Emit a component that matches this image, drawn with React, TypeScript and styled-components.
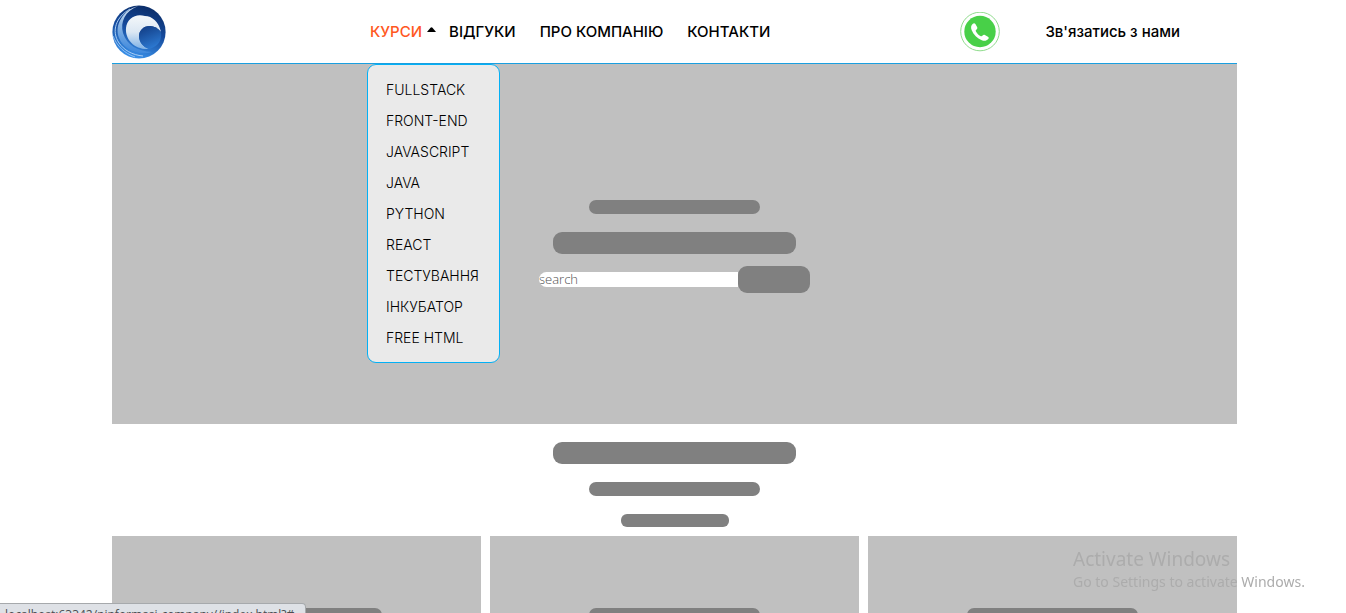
import React from 'react';
import styled, { createGlobalStyle } from 'styled-components';

const GlobalStyle = createGlobalStyle`
  * { box-sizing: border-box; }
  html, body, #root { height: 100%; }
  body {
    margin: 0;
    overflow: hidden;
    background: #fff;
    color: #000;
    font-family: Inter, "Noto Sans", sans-serif;
    font-size: 15px;
  }
`;

const Page = styled.div`
  height: 100%;
  overflow: hidden;
  padding: 0 109px 0 112px;
`;

const Header = styled.header`
  position: relative;
  display: flex;
  align-items: center;
  height: 64px;
  border-bottom: 1px solid #1a9fe0;
`;

const LogoLink = styled.a`
  display: block;
  width: 54px;
  height: 54px;
`;

const Nav = styled.nav`
  margin-left: 204px;
  flex: 1;
`;

const NavList = styled.ul`
  display: flex;
  gap: 24px;
  margin: 0;
  padding: 0;
  list-style: none;
`;

const NavItem = styled.li<{ $wide?: boolean }>`
  position: relative;
  margin-right: ${(p) => (p.$wide ? '-11px' : '0')};
`;

const NavLink = styled.a<{ $active?: boolean }>`
  display: flex;
  align-items: center;
  gap: 5px;
  line-height: 24px;
  font-weight: 500;
  white-space: nowrap;
  text-decoration: none;
  color: ${(p) => (p.$active ? '#ff5722' : '#000')};
`;

const Caret = styled.svg`
  display: block;
  margin-bottom: 4px;
`;

const Dropdown = styled.ul`
  position: absolute;
  z-index: 2;
  top: 44px;
  left: -3px;
  width: 133px;
  margin: 0;
  padding: 9px 18px;
  list-style: none;
  background: #eaeaea;
  border: 1px solid #03b0f5;
  border-radius: 9px;
`;

const DropdownLink = styled.a`
  display: block;
  line-height: 31px;
  font-size: 14px;
  font-weight: 300;
  white-space: nowrap;
  color: #000;
  text-decoration: none;
`;

const Contact = styled.div`
  display: flex;
  align-items: center;
  gap: 45px;
  margin-right: 57px;
`;

const PhoneLink = styled.a`
  display: block;
  height: 40px;
`;

const ContactLink = styled.a`
  font-weight: 500;
  line-height: 24px;
  white-space: nowrap;
  color: #000;
  text-decoration: none;
`;

const Hero = styled.section`
  display: flex;
  flex-direction: column;
  align-items: center;
  gap: 18px;
  height: 360px;
  padding-top: 136px;
  background: #c0c0c0;
`;

const sizes = {
  large: [243, 22, 9],
  medium: [171, 14, 7],
  small: [108, 13, 6],
};

const Bar = styled.div<{ $size: keyof typeof sizes }>`
  width: ${(p) => sizes[p.$size][0]}px;
  height: ${(p) => sizes[p.$size][1]}px;
  border-radius: ${(p) => sizes[p.$size][2]}px;
  background: #808080;
`;

const SearchForm = styled.form`
  display: flex;
  align-items: center;
  margin-top: -6px;
`;

const SearchInput = styled.input`
  width: 199px;
  height: 15px;
  padding: 0;
  border: 0;
  border-radius: 9px 0 0 9px;
  background: #fff;
  font: 300 13px/15px "Open Sans", sans-serif;
  color: #000;
  &::placeholder { color: #505050; opacity: 1; }
`;

const SearchButton = styled.button`
  width: 72px;
  height: 27px;
  padding: 0;
  border: 0;
  border-radius: 9px;
  background: #808080;
`;

const Intro = styled.section`
  display: flex;
  flex-direction: column;
  align-items: center;
  gap: 18px;
  padding: 18px 0 9px;
`;

const Cards = styled.section`
  display: grid;
  grid-template-columns: repeat(3, 1fr);
  gap: 9px;
`;

const Card = styled.article`
  display: flex;
  flex-direction: column;
  align-items: center;
  min-height: 300px;
  padding-top: 72px;
  background: #c0c0c0;
`;

const StatusBar = styled.div`
  position: fixed;
  left: 0;
  bottom: -12px;
  z-index: 3;
  width: 306px;
  height: 22px;
  padding-left: 5px;
  border: 1px solid #a6a9ac;
  border-left: 0;
  border-radius: 0 4px 0 0;
  background: #dee1e6;
  font: 12px/22px "Open Sans", sans-serif;
  color: #4a4d51;
  white-space: nowrap;
  overflow: hidden;
`;

const Watermark = styled.aside`
  position: fixed;
  right: 37px;
  bottom: 21px;
  z-index: 3;
  width: 236px;
  color: #acacac;
  font-family: "Noto Sans", sans-serif;
  white-space: nowrap;
`;

const WatermarkTitle = styled.div`
  font-size: 19px;
  line-height: 25px;
`;

const WatermarkText = styled.div`
  font-size: 14px;
  line-height: 20px;
`;

const courses = ['FULLSTACK', 'FRONT-END', 'JAVASCRIPT', 'JAVA', 'PYTHON', 'REACT', 'ТЕСТУВАННЯ', 'ІНКУБАТОР', 'FREE HTML'];

function Logo() {
  return (
    <svg width="54" height="54" viewBox="0 0 54 54" aria-hidden="true">
      <defs>
        <linearGradient id="sea" x1="0.65" y1="0" x2="0.35" y2="1">
          <stop offset="0" stopColor="#0b2c66" />
          <stop offset="0.45" stopColor="#154a9c" />
          <stop offset="1" stopColor="#3c95ee" />
        </linearGradient>
        <linearGradient id="foam" x1="0.5" y1="1" x2="0.5" y2="0">
          <stop offset="0" stopColor="#7fb2e6" />
          <stop offset="0.5" stopColor="#dbe7f3" />
          <stop offset="1" stopColor="#f5f8fa" />
        </linearGradient>
        <linearGradient id="sweep" x1="0.6" y1="0" x2="0.5" y2="1">
          <stop offset="0" stopColor="#e4eef8" />
          <stop offset="0.4" stopColor="#8fb8e4" />
          <stop offset="1" stopColor="#3a86dc" />
        </linearGradient>
        <linearGradient id="curl" x1="0.2" y1="0" x2="0.6" y2="1">
          <stop offset="0" stopColor="#123d85" />
          <stop offset="1" stopColor="#2d7bd4" />
        </linearGradient>
        <clipPath id="disc"><circle cx="27" cy="27" r="26.6" /></clipPath>
      </defs>
      <g clipPath="url(#disc)">
        <rect width="54" height="54" fill="url(#sea)" />
        <path d="M26 1C13 6 8 17 11 28c4 12 14 18 29 19C27 51 12 45 7 33 2 20 11 5 26 1Z" fill="url(#sweep)" />
        <path d="M14 23C15 13 24 8 33 11c7 0 14 6 16 16-3-4-7-6-11-6-7 0-11 5-11 10 0 6 4 11 10 13C23 45 13 35 14 23Z" fill="url(#foam)" />
        <path d="M27 31c0-5 4-10 11-10 4 0 8 2 11 6 1 8-2 14-12 17-6-2-10-7-10-13Z" fill="url(#curl)" />
        <path d="M18 4C4 12-1 26 7 38c5 7 13 12 24 13" fill="none" stroke="#a9cdf3" strokeWidth="1" />
        <path d="M1 31c4 10 11 17 22 21" fill="none" stroke="#8fc0f5" strokeWidth="1" />
      </g>
    </svg>
  );
}

function PhoneIcon() {
  return (
    <svg width="40" height="40" viewBox="0 0 40 40" aria-hidden="true">
      <circle cx="20" cy="19.500" r="19.3" fill="#fff" stroke="#91dc8e" strokeWidth="1" />
      <circle cx="20" cy="19.500" r="15.700" fill="#48d048" />
      <path d="M12.900 11.700c.9-.9 1.900-.6 2.500.4l1.700 3c.5 1 .3 1.800-.6 2.400-.9.600-1 1.300-.4 2.200 1.100 1.900 2.400 3.200 4.300 4.300.9.500 1.700.4 2.200-.5.6-.9 1.400-1.100 2.300-.6l3 1.800c1 .6 1.100 1.500.3 2.400-1.600 1.900-3.800 2.200-6.400 1.200-4.600-1.900-8.200-5.500-10.100-10.100-1.100-2.700-.7-4.900 1.200-6.500Z" fill="#fff" />
    </svg>
  );
}

export default function App() {
  return (
    <>
      <GlobalStyle />
      <Page>
        <Header>
          <LogoLink href="#" aria-label="Home"><Logo /></LogoLink>
          <Nav>
            <NavList>
              <NavItem $wide>
                <NavLink href="#" $active>
                  КУРСИ
                  <Caret width="9" height="5" viewBox="0 0 9 5" aria-hidden="true">
                    <path d="M0 5 3.500.8q1-1 2 0L9 5Z" fill="#000" />
                  </Caret>
                </NavLink>
                <Dropdown>
                  {courses.map((name) => (
                    <li key={name}><DropdownLink href="#">{name}</DropdownLink></li>
                  ))}
                </Dropdown>
              </NavItem>
              <NavItem><NavLink href="#">ВІДГУКИ</NavLink></NavItem>
              <NavItem><NavLink href="#">ПРО КОМПАНІЮ</NavLink></NavItem>
              <NavItem><NavLink href="#">КОНТАКТИ</NavLink></NavItem>
            </NavList>
          </Nav>
          <Contact>
            <PhoneLink href="#" aria-label="Phone"><PhoneIcon /></PhoneLink>
            <ContactLink href="#">Зв'язатись з нами</ContactLink>
          </Contact>
        </Header>
        <Hero>
          <Bar $size="medium" />
          <Bar $size="large" />
          <SearchForm>
            <SearchInput type="text" placeholder="search" aria-label="search" />
            <SearchButton type="button" aria-label="search" />
          </SearchForm>
        </Hero>
        <Intro>
          <Bar $size="large" />
          <Bar $size="medium" />
          <Bar $size="small" />
        </Intro>
        <Cards>
          <Card><Bar $size="medium" /></Card>
          <Card><Bar $size="medium" /></Card>
          <Card><Bar $size="medium" /></Card>
        </Cards>
      </Page>
      <StatusBar>localhost:63342/pinformasi-company//index.html?#</StatusBar>
      <Watermark>
        <WatermarkTitle>Activate Windows</WatermarkTitle>
        <WatermarkText>Go to Settings to activate Windows.</WatermarkText>
      </Watermark>
    </>
  );
}
